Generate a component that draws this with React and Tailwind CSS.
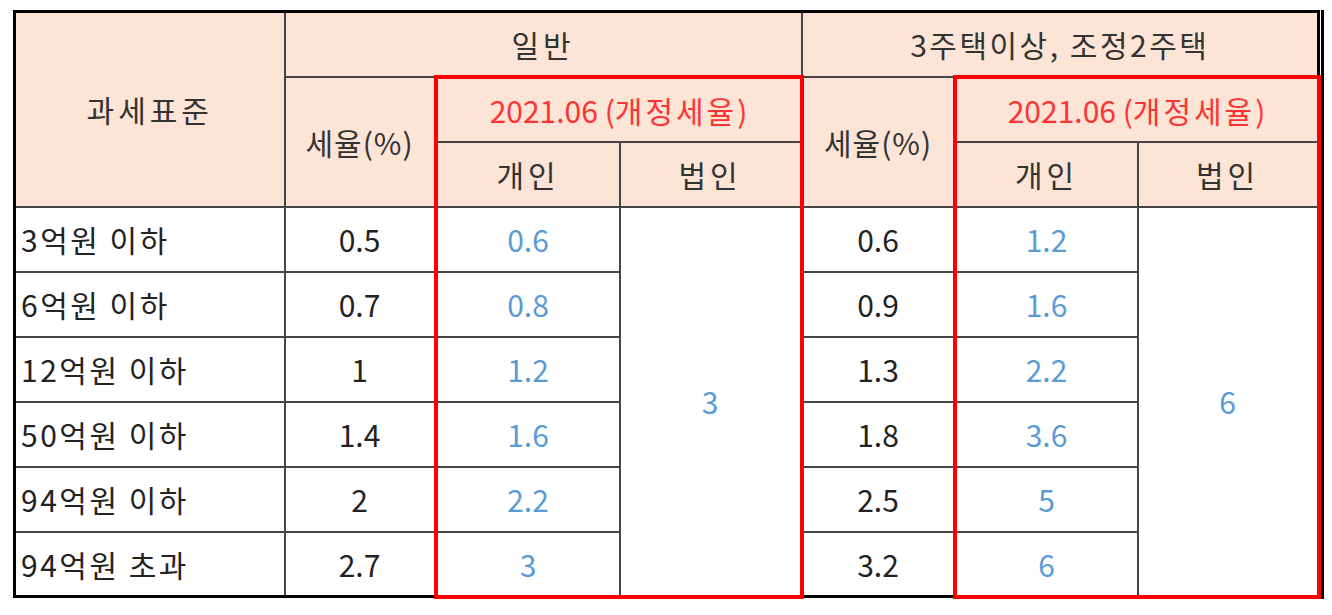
const rows = [
  { label: "3억원 이하", a: "0.5", b: "0.6", c: "0.6", d: "1.2" },
  { label: "6억원 이하", a: "0.7", b: "0.8", c: "0.9", d: "1.6" },
  { label: "12억원 이하", a: "1", b: "1.2", c: "1.3", d: "2.2" },
  { label: "50억원 이하", a: "1.4", b: "1.6", c: "1.8", d: "3.6" },
  { label: "94억원 이하", a: "2", b: "2.2", c: "2.5", d: "5" },
  { label: "94억원 초과", a: "2.7", b: "3", c: "3.2", d: "6" },
];

const cell = "border-2 border-[#454545] h-[65px] p-0 text-center align-middle";
const head = cell + " bg-[#fce4d6] text-[#333333] font-normal";
const red = " border-[#ff0000]";

export default function App() {
  return (
    <div className="w-[1332px] h-[615px] bg-white pt-[10px] pl-[13px]">
      <div
        className="inline-block border-r-[3px] border-black"
        style={{ fontFamily: '"Noto Sans CJK KR", "Noto Sans", sans-serif' }}
      >
        <table className="table-fixed border-collapse border-[3px] border-black text-[30px] leading-none w-[1304px]">
          <colgroup>
            <col className="w-[270px]" />
            <col className="w-[151px]" />
            <col className="w-[184px]" />
            <col className="w-[182px]" />
            <col className="w-[153px]" />
            <col className="w-[183px]" />
            <col className="w-[181px]" />
          </colgroup>
          <thead>
            <tr>
              <th rowSpan={3} className={head + " tracking-[4px]"}>과세표준</th>
              <th colSpan={3} className={head + " tracking-[4px]"}>일반</th>
              <th colSpan={3} className={head + " tracking-[2.5px]"}>3주택이상, 조정2주택</th>
            </tr>
            <tr>
              <th rowSpan={2} className={head + " tracking-[1px]"}>세율(%)</th>
              <th colSpan={2} className={head + " text-[#ff3333] border-t-4 border-l-4 border-r-4 border-t-[#ff0000] border-l-[#ff0000] border-r-[#ff0000]"}>
                2021.06 (<span className="tracking-[3px]">개정세율</span>)
              </th>
              <th rowSpan={2} className={head + " tracking-[1px]"}>세율(%)</th>
              <th colSpan={2} className={head + " text-[#ff3333] border-t-4 border-l-4 border-r-4 border-t-[#ff0000] border-l-[#ff0000] border-r-[#ff0000]"}>
                2021.06 (<span className="tracking-[3px]">개정세율</span>)
              </th>
            </tr>
            <tr>
              <th className={head + " text-[#5b9bd5] tracking-[4px] border-l-4 border-l-[#ff0000]"}>개인</th>
              <th className={head + " text-[#5b9bd5] tracking-[4px] border-r-4 border-r-[#ff0000]"}>법인</th>
              <th className={head + " text-[#5b9bd5] tracking-[4px] border-l-4 border-l-[#ff0000]"}>개인</th>
              <th className={head + " text-[#5b9bd5] tracking-[4px] border-r-4 border-r-[#ff0000]"}>법인</th>
            </tr>
          </thead>
          <tbody className="text-[#222222]">
            {rows.map((r, i) => {
              const last = i === rows.length - 1;
              return (
                <tr key={r.label}>
                  <td className={cell + " text-left pl-[5px] tracking-[2.5px]"}>{r.label}</td>
                  <td className={cell}>{r.a}</td>
                  <td
                    className={
                      cell +
                      " text-[#5b9bd5] border-l-4 border-l-[#ff0000]" +
                      (last ? " border-b-4 border-b-[#ff0000]" : "")
                    }
                  >
                    {r.b}
                  </td>
                  {i === 0 && (
                    <td rowSpan={6} className={cell + " text-[#5b9bd5] border-r-4 border-b-4 border-r-[#ff0000] border-b-[#ff0000]"}>
                      3
                    </td>
                  )}
                  <td className={cell}>{r.c}</td>
                  <td
                    className={
                      cell +
                      " text-[#5b9bd5] border-l-4 border-l-[#ff0000]" +
                      (last ? " border-b-4 border-b-[#ff0000]" : "")
                    }
                  >
                    {r.d}
                  </td>
                  {i === 0 && (
                    <td rowSpan={6} className={cell + " text-[#5b9bd5] border-r-4 border-b-4 border-r-[#ff0000] border-b-[#ff0000]"}>
                      6
                    </td>
                  )}
                </tr>
              );
            })}
          </tbody>
        </table>
      </div>
    </div>
  );
}
